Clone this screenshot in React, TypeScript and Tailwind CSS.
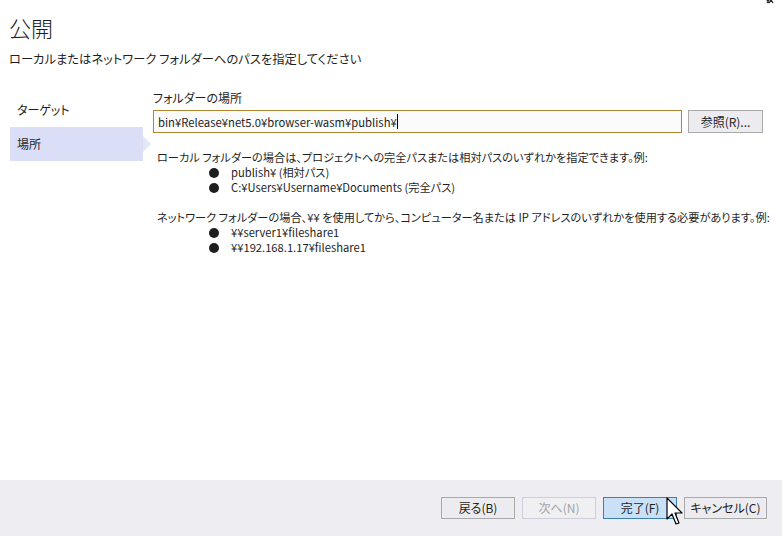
import React from 'react'

function Bullet({ children }: { children: React.ReactNode }) {
  return (
    <div className="flex items-center h-[15px]">
      <span className="ml-[52px] w-[10px] h-[10px] rounded-full bg-[#1e1e1e]" />
      <span className="ml-[12px]">{children}</span>
    </div>
  )
}

function FooterButton({
  label,
  variant = 'normal',
  width = 'w-[74px]',
}: {
  label: string
  variant?: 'normal' | 'disabled' | 'primary'
  width?: string
}) {
  const styles = {
    normal: 'bg-[#ececf0] border-[#a9a9a9] text-[#1e1e1e]',
    disabled: 'bg-[#f0f0f3] border-[#cccedb] text-[#a2a4a5]',
    primary: 'bg-[#c9e0f7] border-[#3c7fb1] text-[#1e1e1e]',
  }[variant]
  return (
    <div
      className={`${width} h-[22px] border flex items-center justify-center text-[12px] ${styles}`}
    >
      {label}
    </div>
  )
}

export default function App() {
  return (
    <div className="relative w-[782px] h-[536px] bg-white flex flex-col text-[#1e1e1e] overflow-hidden font-['Noto_Sans_CJK_JP','Noto_Sans',sans-serif] [font-feature-settings:'palt']">
      {/* Header */}
      <div className="pl-[9px] pt-[12px]">
        <h1 className="text-[22px] leading-[30px] font-light">公開</h1>
        <p className="mt-[9px] text-[12.3px] leading-[16px]">
          ローカルまたはネットワーク フォルダーへのパスを指定してください
        </p>
      </div>

      {/* Body */}
      <div className="flex flex-1 mt-[23px]">
        {/* Sidebar */}
        <div className="ml-[10px] w-[133px] shrink-0 flex flex-col text-[12px]">
          <div className="h-[34px] pl-[7px] flex items-center mt-[3px]">ターゲット</div>
          <div className="relative h-[34px] pl-[7px] flex items-center bg-[#dadff7]">
            場所
            <span className="absolute right-[-8px] top-[9px] w-0 h-0 border-y-[8px] border-y-transparent border-l-[8px] border-l-[#e4e7f8]" />
          </div>
        </div>

        {/* Content */}
        <div className="ml-[10px] flex-1 min-w-0 text-[12px]">
          <div className="leading-[16px]">フォルダーの場所</div>
          <div className="flex mt-[4px] gap-[6px]">
            <div className="w-[529px] h-[23px] border border-[#b5852f] bg-[#fbfbfb] flex items-center pl-[4px] leading-[16px] text-[11.3px]">
              bin¥Release¥net5.0¥browser-wasm¥publish¥
              <span className="w-px h-[15px] bg-black" />
            </div>
            <div className="w-[75px] h-[23px] border border-[#a9a9a9] bg-[#ececf0] flex items-center justify-center">
              参照(R)...
            </div>
          </div>

          <div className="mt-[17px] pl-[4px] text-[11.2px] leading-[15px] whitespace-nowrap">
            <div>ローカル フォルダーの場合は、プロジェクトへの完全パスまたは相対パスのいずれかを指定できます。例:</div>
            <Bullet>publish¥ (相対パス)</Bullet>
            <Bullet>C:¥Users¥Username¥Documents (完全パス)</Bullet>
            <div className="mt-[15px]">
              ネットワーク フォルダーの場合、¥¥ を使用してから、コンピューター名または IP アドレスのいずれかを使用する必要があります。例:
            </div>
            <Bullet>¥¥server1¥fileshare1</Bullet>
            <Bullet>¥¥192.168.1.17¥fileshare1</Bullet>
          </div>
        </div>
      </div>

      {/* Footer */}
      <div className="h-[56px] bg-[#eeeef2] flex items-start justify-end pr-[15px] pt-[17px] gap-[7px]">
        <FooterButton label="戻る(B)" />
        <FooterButton label="次へ(N)" variant="disabled" />
        <FooterButton label="完了(F)" variant="primary" />
        <FooterButton label="キャンセル(C)" width="w-[83px]" />
      </div>

      {/* close button, cut off at the top edge */}
      <svg className="absolute left-[764px] top-0" width="12" height="4" viewBox="0 0 12 4">
        <path d="M1 -3 L5 3 M9 -3 L5 3 M3 3 L5 0 M7 0 L9 3" stroke="#1e1e1e" strokeWidth="1.2" fill="none" />
      </svg>

      {/* mouse cursor */}
      <svg className="absolute left-[666px] top-[497px]" width="20" height="30" viewBox="0 0 20 30">
        <path
          d="M1 1 L1 22 L6 17 L10 27 L13 26 L9 16 L16 16 Z"
          fill="white"
          stroke="black"
          strokeWidth="1.2"
          strokeLinejoin="round"
        />
      </svg>
    </div>
  )
}
